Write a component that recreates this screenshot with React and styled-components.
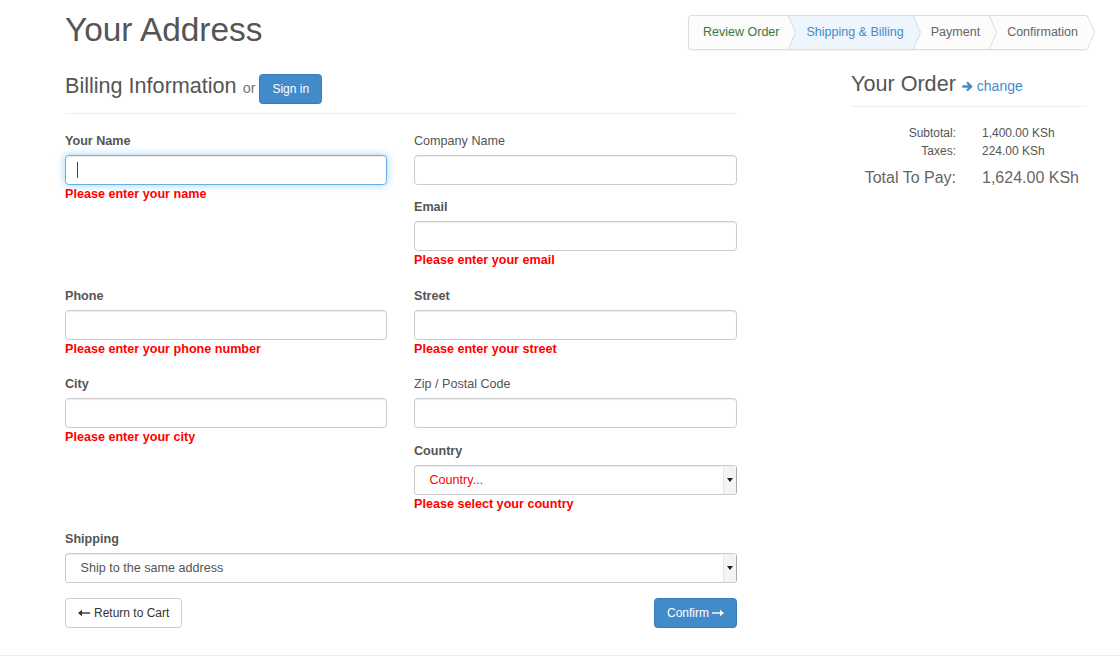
import React from 'react';
import styled, { createGlobalStyle } from 'styled-components';

const GlobalStyle = createGlobalStyle`
  html, body {
    margin: 0;
    padding: 0;
    background: #fff;
  }
  body {
    font-family: "Liberation Sans", Arial, Helvetica, sans-serif;
    font-size: 12.6px;
    color: #333;
  }
  * {
    box-sizing: border-box;
  }
`;

const Page = styled.div`
  padding-top: 12px;
`;

const Container = styled.div`
  width: 1022px;
  margin-left: 65px;
`;

const Header = styled.header`
  display: flex;
  justify-content: space-between;
  align-items: flex-start;
  height: 38px;
`;

const Title = styled.h1`
  margin: 0;
  font-size: 33.4px;
  font-weight: 400;
  line-height: 1.1;
  color: #555;
`;

const Steps = styled.ol`
  position: relative;
  z-index: 0;
  display: flex;
  list-style: none;
  margin: 3px 0 0;
  padding: 0;
  border: 1px solid #ddd;
  border-right: none;
  border-radius: 4px 0 0 4px;
  background: #fcfcfc;
  box-shadow: 0 1px 1px rgba(0, 0, 0, 0.05);
  font-size: 12.5px;
  line-height: 33px;
`;

const stepColor = (state) => {
  if (state === 'done') return '#3c763d';
  if (state === 'active') return '#428bca';
  return '#666';
};

const Step = styled.li`
  position: relative;
  padding: 0 9px 0 ${(p) => (p.$first ? 14 : 10)}px;
  margin-right: ${(p) => (p.$last ? 0 : 8)}px;
  color: ${(p) => stepColor(p.$state)};
  white-space: nowrap;

  &::before {
    content: '';
    display: ${(p) => (p.$state === 'active' ? 'block' : 'none')};
    position: absolute;
    top: 0;
    bottom: 0;
    left: -8px;
    right: -8px;
    z-index: -1;
    background: #eef5fc;
    clip-path: polygon(0 0, calc(100% - 8px) 0, 100% 50%, calc(100% - 8px) 100%, 0 100%, 8px 50%);
  }
`;

const StepChevron = styled.svg`
  position: absolute;
  top: 0;
  right: -8px;
  width: 8px;
  height: 33px;
`;

const Main = styled.div`
  display: grid;
  grid-template-columns: 672px 235px;
  column-gap: 114px;
  margin-top: 23.5px;
`;

const HeadingRow = styled.div`
  display: flex;
  align-items: baseline;
  margin-top: ${(p) => p.$offset || 0}px;
`;

const HeadingText = styled.h3`
  margin: 0;
  font-size: 21.6px;
  font-weight: 400;
  line-height: 1.1;
  color: #555;
`;

const Or = styled.span`
  margin: 0 4px 0 6px;
  font-size: 14.4px;
  color: #777;
`;

const Button = styled.button`
  display: inline-flex;
  align-items: center;
  gap: ${(p) => p.$gap || 0}px;
  height: 30px;
  padding: 5px 12px;
  font-family: inherit;
  font-size: 12px;
  line-height: 18px;
  border-radius: 3.6px;
  border: 1px solid ${(p) => (p.$primary ? '#357ebd' : '#ccc')};
  background: ${(p) => (p.$primary ? '#428bca' : '#fff')};
  color: ${(p) => (p.$primary ? '#fff' : '#333')};
  cursor: pointer;
`;

const Divider = styled.hr`
  margin: ${(p) => p.$top}px 0 ${(p) => p.$bottom}px;
  border: 0;
  border-top: 1px solid #eee;
  height: 0;
`;

const FormGrid = styled.div`
  display: grid;
  grid-template-columns: 322px 323px;
  column-gap: 27px;
  align-items: start;
`;

const Field = styled.div`
  margin-bottom: ${(p) => (p.$wide ? 15 : 13.5)}px;
  grid-column: ${(p) => (p.$wide ? '1 / -1' : 'auto')};
`;

const Label = styled.label`
  display: block;
  margin-bottom: 5px;
  font-size: 12.6px;
  line-height: 18px;
  font-weight: ${(p) => (p.$bold ? 700 : 400)};
  color: #555;
`;

const InputWrap = styled.div`
  position: relative;
`;

const Input = styled.input`
  display: block;
  width: 100%;
  height: 30px;
  padding: 5px 12px;
  font-family: inherit;
  font-size: 12.6px;
  color: #555;
  background: #fff;
  border: 1px solid ${(p) => (p.$focused ? '#66afe9' : '#ccc')};
  border-radius: 3.6px;
  outline: none;
  box-shadow: inset 0 1px 1px rgba(0, 0, 0, 0.075)
    ${(p) => (p.$focused ? ', 0 0 8px rgba(102, 175, 233, 0.6)' : '')};
`;

const Caret = styled.span`
  position: absolute;
  left: 12px;
  top: 7px;
  width: 1px;
  height: 16px;
  background: #d00;
`;

const Select = styled.select`
  display: block;
  width: 100%;
  height: 30px;
  padding: 0 20px 0 14.5px;
  font-family: inherit;
  font-size: 12.6px;
  color: ${(p) => (p.$invalid ? '#f00' : '#555')};
  background: #fff;
  border: 1px solid #ccc;
  border-right-color: #aaa;
  border-radius: 3.6px;
  box-shadow: inset 0 1px 1px rgba(0, 0, 0, 0.075);
  appearance: none;
  outline: none;
`;

const SelectArrow = styled.span`
  position: absolute;
  top: 1px;
  right: 1px;
  bottom: 1px;
  width: 13px;
  display: flex;
  align-items: center;
  justify-content: center;
  background: #f4f4f4;
  border-left: 1px solid #e4e4e4;
  pointer-events: none;

  &::after {
    content: '';
    border-left: 3px solid transparent;
    border-right: 3px solid transparent;
    border-top: 4px solid #222;
  }
`;

const ErrorText = styled.div`
  padding-bottom: 4px;
  font-size: 12.6px;
  line-height: 18px;
  font-weight: 700;
  color: #f00;
`;

const Actions = styled.div`
  display: flex;
  justify-content: space-between;
`;

const ChangeLink = styled.a`
  margin-left: 6px;
  font-size: 14px;
  color: #428bca;
  text-decoration: none;

  svg {
    vertical-align: -1px;
    margin-right: 4px;
  }
`;

const SummaryGrid = styled.div`
  display: grid;
  grid-template-columns: 105px 1fr;
  column-gap: 26px;
  color: #555;
`;

const SumLabel = styled.div`
  text-align: right;
  font-size: ${(p) => (p.$big ? 16 : 12)}px;
  line-height: ${(p) => (p.$big ? 22 : 18)}px;
  padding-top: ${(p) => (p.$big ? 7 : 0)}px;
  color: ${(p) => (p.$big ? '#666' : '#555')};
  white-space: nowrap;
`;

const SumValue = styled(SumLabel)`
  text-align: left;
`;

const Footer = styled.footer`
  margin-top: 27px;
  height: 2px;
  border-top: 1px solid #eee;
`;

const LongArrow = ({ dir }) => (
  <svg width="12" height="8" viewBox="0 0 12 8">
    {dir === 'left' ? (
      <>
        <line x1="3" y1="4" x2="12" y2="4" stroke="currentColor" strokeWidth="1.4" />
        <polygon points="0,4 4,0.8 4,7.2" fill="currentColor" />
      </>
    ) : (
      <>
        <line x1="0" y1="4" x2="9" y2="4" stroke="currentColor" strokeWidth="1.4" />
        <polygon points="12,4 8,0.8 8,7.2" fill="currentColor" />
      </>
    )}
  </svg>
);

const steps = [
  { label: 'Review Order', state: 'done' },
  { label: 'Shipping & Billing', state: 'active' },
  { label: 'Payment', state: 'todo' },
  { label: 'Confirmation', state: 'todo' },
];

const TextField = ({ label, bold, error, focused }) => (
  <Field>
    <Label $bold={bold}>{label}</Label>
    <InputWrap>
      <Input type="text" $focused={focused} />
      {focused && <Caret />}
    </InputWrap>
    {error && <ErrorText>{error}</ErrorText>}
  </Field>
);

const SelectField = ({ label, value, error, wide }) => (
  <Field $wide={wide}>
    <Label $bold>{label}</Label>
    <InputWrap>
      <Select $invalid={!!error} defaultValue={value}>
        <option value={value}>{value}</option>
      </Select>
      <SelectArrow />
    </InputWrap>
    {error && <ErrorText>{error}</ErrorText>}
  </Field>
);

const App = () => {
  return (
    <>
      <GlobalStyle />
      <Page>
        <Container>
          <Header>
            <Title>Your Address</Title>
            <Steps>
              {steps.map((s, i) => (
                <Step key={s.label} $state={s.state} $first={i === 0} $last={i === steps.length - 1}>
                  {s.label}
                  <StepChevron viewBox="0 0 8 33">
                    <polyline
                      points="0.5,0 7.5,16.5 0.5,33"
                      fill="none"
                      stroke="#c2c2c2"
                      strokeWidth="1"
                      strokeDasharray="1.5 1.2"
                    />
                  </StepChevron>
                </Step>
              ))}
            </Steps>
          </Header>

          <Main>
            <section>
              <HeadingRow>
                <HeadingText>Billing Information</HeadingText>
                <Or>or</Or>
                <Button $primary>Sign in</Button>
              </HeadingRow>
              <Divider $top={9} $bottom={18} />

              <FormGrid>
                <div>
                  <TextField label="Your Name" bold focused error="Please enter your name" />
                </div>
                <div>
                  <TextField label="Company Name" />
                  <TextField label="Email" bold error="Please enter your email" />
                </div>
                <div>
                  <TextField label="Phone" bold error="Please enter your phone number" />
                </div>
                <div>
                  <TextField label="Street" bold error="Please enter your street" />
                </div>
                <div>
                  <TextField label="City" bold error="Please enter your city" />
                </div>
                <div>
                  <TextField label="Zip / Postal Code" />
                  <SelectField label="Country" value="Country..." error="Please select your country" />
                </div>
                <SelectField label="Shipping" value="Ship to the same address" wide />
              </FormGrid>

              <Actions>
                <Button $gap={4}>
                  <LongArrow dir="left" />
                  Return to Cart
                </Button>
                <Button $primary $gap={3}>
                  Confirm
                  <LongArrow dir="right" />
                </Button>
              </Actions>
            </section>

            <aside>
              <HeadingRow $offset={-2}>
                <HeadingText>Your Order</HeadingText>
                <ChangeLink href="#">
                  <svg width="11" height="11" viewBox="0 0 11 11">
                    <path
                      d="M1.3 5.5H9 M5.6 2 L9.2 5.5 L5.6 9"
                      fill="none"
                      stroke="currentColor"
                      strokeWidth="2.4"
                      strokeLinecap="round"
                      strokeLinejoin="round"
                    />
                  </svg>
                  change
                </ChangeLink>
              </HeadingRow>
              <Divider $top={10.8} $bottom={17} />
              <SummaryGrid>
                <SumLabel>Subtotal:</SumLabel>
                <SumValue>1,400.00 KSh</SumValue>
                <SumLabel>Taxes:</SumLabel>
                <SumValue>224.00 KSh</SumValue>
                <SumLabel $big>Total To Pay:</SumLabel>
                <SumValue $big>1,624.00 KSh</SumValue>
              </SummaryGrid>
            </aside>
          </Main>
        </Container>
        <Footer />
      </Page>
    </>
  );
};

export default App;
